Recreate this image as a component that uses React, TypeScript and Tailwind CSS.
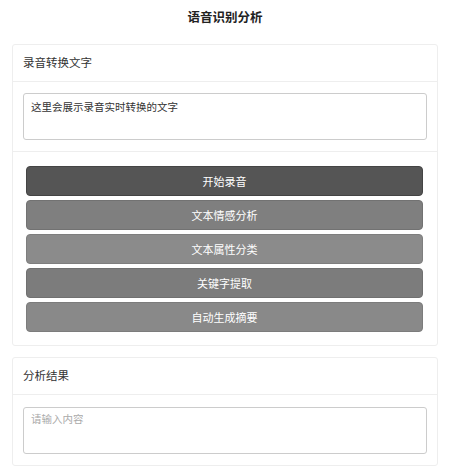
import React from "react";

const font = { fontFamily: '"Noto Sans CJK SC", "Noto Sans", sans-serif' };

export default function App() {
  const buttons = [
    { label: "开始录音", cls: "bg-[#555555] border-[#444444]" },
    { label: "文本情感分析", cls: "bg-[#7f7f7f] border-[#727272]" },
    { label: "文本属性分类", cls: "bg-[#8b8b8b] border-[#7e7e7e]" },
    { label: "关键字提取", cls: "bg-[#7c7c7c] border-[#707070]" },
    { label: "自动生成摘要", cls: "bg-[#898989] border-[#7c7c7c]" },
  ];
  return (
    <div className="w-[450px] h-[466px] bg-white overflow-hidden text-[#333]" style={font}>
      <div className="h-[35px] flex items-center justify-center text-[12.5px] font-bold text-[#222]">
        语音识别分析
      </div>
      <div className="mt-[9px] mx-[12px] border border-[#eeeeee] rounded-[3px] bg-white">
        <div className="h-[37px] flex items-center px-[10px] text-[11.5px] border-b border-[#eeeeee]">
          录音转换文字
        </div>
        <div className="px-[10px] py-[11px] border-b border-[#eeeeee]">
          <div className="h-[47px] border border-[#cccccc] rounded-[3px] px-[7px] py-[5px] text-[10.5px] text-[#333] leading-[16px]">
            这里会展示录音实时转换的文字
          </div>
        </div>
        <div className="pt-[14px] pb-[13px] pl-[13px] pr-[14px] flex flex-col gap-[4px]">
          {buttons.map((b) => (
            <div
              key={b.label}
              className={`h-[30px] rounded-[4px] border flex items-center justify-center text-white text-[11px] ${b.cls}`}
            >
              {b.label}
            </div>
          ))}
        </div>
      </div>
      <div className="mt-[11px] mx-[12px] border border-[#eeeeee] rounded-[3px] bg-white">
        <div className="h-[37px] flex items-center px-[10px] text-[11.5px] border-b border-[#eeeeee]">
          分析结果
        </div>
        <div className="px-[10px] pt-[12px] pb-[11px]">
          <div className="h-[47px] border border-[#cccccc] rounded-[3px] px-[7px] py-[3px] text-[10.5px] text-[#aaaaaa] leading-[16px]">
            请输入内容
          </div>
        </div>
      </div>
    </div>
  );
}
